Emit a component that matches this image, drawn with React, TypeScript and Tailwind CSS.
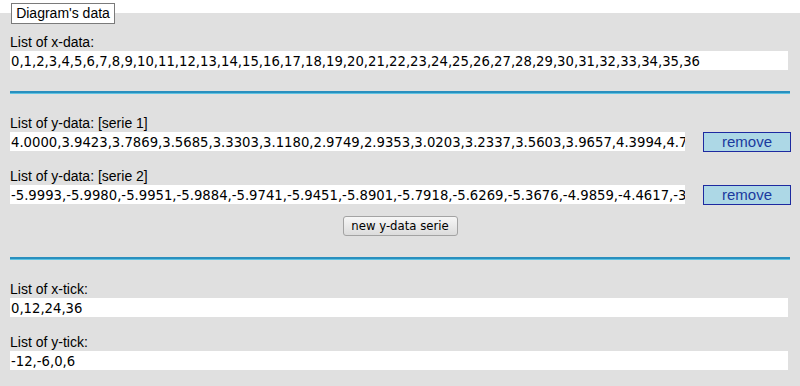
import React from "react";

const xData = Array.from({ length: 37 }, (_, i) => String(i)).join(",");
const y1 =
  "4.0000,3.9423,3.7869,3.5685,3.3303,3.1180,2.9749,2.9353,3.0203,3.2337,3.5603,3.9657,4.3994,4.7985,5.1012,5.2618,5.2618,5.1012";
const y2 =
  "-5.9993,-5.9980,-5.9951,-5.9884,-5.9741,-5.9451,-5.8901,-5.7918,-5.6269,-5.3676,-4.9859,-4.4617,-3.7901,-2.9818";

function Label({ children }: { children: React.ReactNode }) {
  return (
    <div className="h-[16px] leading-[16px] text-[14px] text-black [font-family:'Liberation_Sans',Arial,sans-serif]">
      {children}
    </div>
  );
}

function Field({ value, w }: { value: string; w: string }) {
  return (
    <div
      className={`mt-px h-[19px] ${w} bg-white overflow-hidden whitespace-nowrap pl-px leading-[19px] text-[14.7px] text-black [font-family:'DejaVu_Sans_Condensed','DejaVu_Sans',sans-serif]`}
    >
      {value}
    </div>
  );
}

function Rule() {
  return (
    <div className="w-[780px]">
      <div className="h-[2px] bg-[#2a8fbe]" />
      <div className="h-px bg-[#5ec3e2]" />
    </div>
  );
}

function RemoveBtn() {
  return (
    <button className="mt-px block h-[20px] w-[88px] border border-[#1e2aa0] bg-[#add8e6] text-[15px] leading-[18px] text-[#1b3a9e] [font-family:'Liberation_Sans',Arial,sans-serif]">
      remove
    </button>
  );
}

export default function App() {
  return (
    <div className="w-[800px] h-[386px] bg-white overflow-hidden flex flex-col">
      <div className="pt-[3px] pl-[11px] relative z-10">
        <div className="h-[21px] w-[104px] border border-[#7a7a7a] bg-white flex items-center justify-center text-[14px] text-black [font-family:'Liberation_Sans',Arial,sans-serif]">
          Diagram's data
        </div>
      </div>
      <div className="-mt-[11px] flex-1 bg-[#e0e0e0] pl-[10px] pt-[21px]">
        <Label>List of x-data:</Label>
        <Field value={xData} w="w-[778px]" />
        <div className="mt-[21px]">
          <Rule />
        </div>
        <div className="mt-[21px]">
          <Label>List of y-data: [serie 1]</Label>
          <div className="flex items-start gap-[18px]">
            <Field value={y1} w="w-[675px]" />
            <RemoveBtn />
          </div>
        </div>
        <div className="mt-[16px]">
          <Label>List of y-data: [serie 2]</Label>
          <div className="flex items-start gap-[18px]">
            <Field value={y2} w="w-[675px]" />
            <RemoveBtn />
          </div>
        </div>
        <div className="mt-[11px] w-[780px] flex justify-center">
          <button className="block h-[20px] w-[115px] rounded-[3px] border border-[#a3a3a3] bg-gradient-to-b from-[#f7f7f7] to-[#dcdcdc] text-[13px] leading-[18px] text-black [font-family:'DejaVu_Sans_Condensed','DejaVu_Sans',sans-serif]">
            new y-data serie
          </button>
        </div>
        <div className="mt-[21px]">
          <Rule />
        </div>
        <div className="mt-[21px]">
          <Label>List of x-tick:</Label>
          <Field value="0,12,24,36" w="w-[778px]" />
        </div>
        <div className="mt-[17px]">
          <Label>List of y-tick:</Label>
          <Field value="-12,-6,0,6" w="w-[778px]" />
        </div>
      </div>
    </div>
  );
}
